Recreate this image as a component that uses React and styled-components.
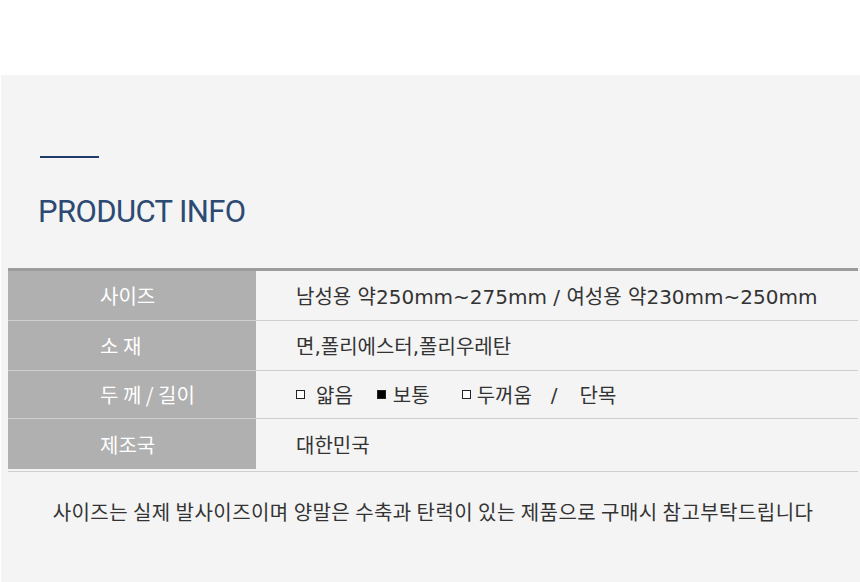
import React from "react";
import styled, { createGlobalStyle } from "styled-components";

const GlobalStyle = createGlobalStyle`
  html, body {
    margin: 0;
    padding: 0;
    background: #fff;
    font-family: "Noto Sans CJK KR", "Noto Sans", sans-serif;
  }
  * { box-sizing: border-box; }
`;

const Page = styled.div`
  width: 860px;
  height: 582px;
  padding-top: 75px;
  overflow: hidden;
`;

const Panel = styled.section`
  margin-left: 1px;
  height: 507px;
  background: #f4f4f4;
  padding: 81px 2px 0 7px;
`;

const Rule = styled.div`
  width: 59px;
  height: 2px;
  margin-left: 32px;
  background: #1f3c6b;
`;

const Title = styled.h2`
  margin: 34px 0 0 30px;
  font-family: Roboto, "Noto Sans", sans-serif;
  font-weight: 400;
  font-size: 31px;
  line-height: 40px;
  letter-spacing: -0.6px;
  color: #2c4a73;
`;

const Table = styled.div`
  margin-top: 36px;
  border-top: 3px solid #9c9c9c;
  border-bottom: 1px solid #cfcfcf;
  padding-bottom: 2px;
`;

const Row = styled.div`
  display: grid;
  grid-template-columns: 248px 1fr;
  height: ${(p) => p.$h || 50}px;
  border-bottom: ${(p) => (p.$last ? "none" : "1px solid #cfcfcf")};
`;

const Label = styled.div`
  background: #b0b0b0;
  color: #fff;
  font-size: 20px;
  display: flex;
  align-items: center;
  padding-left: 92px;
`;

const Value = styled.div`
  display: flex;
  align-items: center;
  padding-left: 40px;
  font-family: "DejaVu Sans", "Noto Sans CJK KR", sans-serif;
  font-size: 20px;
  color: #333;
  letter-spacing: 0;
`;

const Box = styled.span`
  display: inline-block;
  width: 9px;
  height: 9px;
  border: 1px solid #222;
  background: ${(p) => (p.$on ? "#000" : "#fff")};
  margin-right: ${(p) => p.$gap}px;
`;

const Opt = styled.span`
  margin-right: ${(p) => p.$gap || 0}px;
`;

const Note = styled.p`
  margin: 26px 0 0;
  text-align: center;
  font-size: 20px;
  line-height: 28px;
  color: #333;
  letter-spacing: 0.45px;
`;

export default function App() {
  return (
    <>
      <GlobalStyle />
      <Page>
        <Panel>
          <Rule />
          <Title>PRODUCT INFO</Title>
          <Table>
            <Row>
              <Label>사이즈</Label>
              <Value>남성용 약250mm~275mm / 여성용 약230mm~250mm</Value>
            </Row>
            <Row>
              <Label>소 재</Label>
              <Value>면,폴리에스터,폴리우레탄</Value>
            </Row>
            <Row $h={48}>
              <Label>두 께 / 길이</Label>
              <Value>
                <Box $gap={11} />
                <Opt $gap={24}>얇음</Opt>
                <Box $on $gap={7} />
                <Opt $gap={32}>보통</Opt>
                <Box $gap={6} />
                <Opt $gap={19}>두꺼움</Opt>
                <Opt $gap={22}>/</Opt>
                <Opt>단목</Opt>
              </Value>
            </Row>
            <Row $last>
              <Label>제조국</Label>
              <Value>대한민국</Value>
            </Row>
          </Table>
          <Note>사이즈는 실제 발사이즈이며 양말은 수축과 탄력이 있는 제품으로 구매시 참고부탁드립니다</Note>
        </Panel>
      </Page>
    </>
  );
}
